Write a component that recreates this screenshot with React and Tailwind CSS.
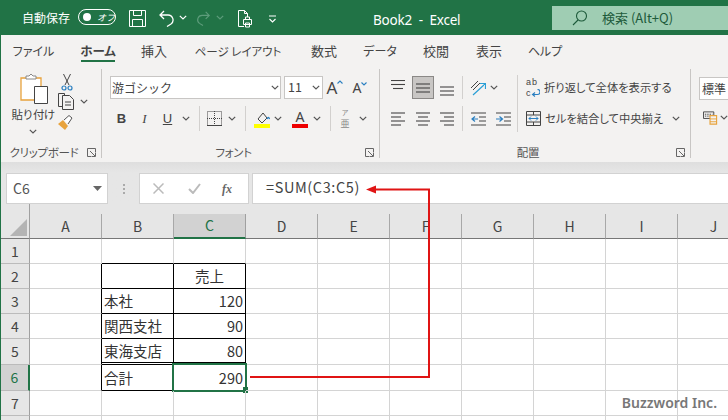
const ui = { fontFamily: '"Noto Sans CJK JP", sans-serif' };

const Chevron = ({ className = 'w-[8px]', color = '#555' }) => (
  <div className={`${className} flex justify-center shrink-0`}>
    <svg width="8" height="5" viewBox="0 0 8 5" fill="none" stroke={color} strokeWidth="1.2">
      <path d="M.8 .8 4 4 7.2 .8" />
    </svg>
  </div>
);

const Launcher = () => (
  <svg width="9" height="9" viewBox="0 0 9 9" fill="none" stroke="#666" strokeWidth="1">
    <path d="M8.5 4V.5H.5v8H4M3 3l5 5M8.5 4.500v4h-4" />
  </svg>
);

const Lines = ({ rows }) => (
  <svg width="16" height="16" viewBox="0 0 16 16" stroke="#444" strokeWidth="1.1" fill="none">
    {rows.map(([a, b, y]) => <path key={y} d={`M${a} ${y}H${b}`} />)}
  </svg>
);

const Cell = ({ className, children }) => (
  <div className={`${className} flex items-center justify-center shrink-0`}>{children}</div>
);

const Sep = ({ className }) => (
  <div className={`${className} flex justify-center shrink-0 h-full`}>
    <div className="w-px h-full bg-[#d2d0ce]" />
  </div>
);

const GroupLabel = ({ children }) => (
  <div className="h-[19px] -mb-[4px] flex items-center shrink-0">
    <div className="flex-1 text-center text-[11.5px] text-[#555] [font-feature-settings:'palt'] tracking-[-0.3px]">{children}</div>
    <div className="w-[14px] flex"><Launcher /></div>
  </div>
);

const tabs = [
  ['ファイル', 'w-[37px] ml-[14px] text-[12px]'],
  ['ホーム', 'w-[34px] ml-[29px] font-bold text-[12.5px]'],
  ['挿入', 'w-[26px] ml-[26px]'],
  ['ページ レイアウト', 'w-[86px] ml-[28px] text-[11.5px]'],
  ['数式', 'w-[26px] ml-[30px]'],
  ['データ', 'w-[32px] ml-[27px] text-[12px]'],
  ['校閲', 'w-[26px] ml-[27px]'],
  ['表示', 'w-[26px] ml-[27px]'],
  ['ヘルプ', 'w-[32px] ml-[27px] text-[12px]'],
];

const TitleBar = () => (
  <div className="h-[35px] bg-[#217346] flex items-start text-white shrink-0">
    <div className="ml-[21px] mt-[9px] text-[12px] leading-[17px] w-[50px] whitespace-nowrap">自動保存</div>
    <div className="ml-[6px] mt-[9px] w-[38px] h-[16px] border border-white rounded-full flex items-center pl-[4px]">
      <div className="w-[8px] h-[8px] rounded-full bg-white" />
      <div className="ml-[6px] text-[9px] leading-none italic">オフ</div>
    </div>
    <svg className="ml-[13px] mt-[10px]" width="17" height="17" viewBox="0 0 17 17" fill="none" stroke="#fff" strokeWidth="1">
      <path d="M.5.5h16v16H.5zM4.500.5v5h8v-5M3.500 16.500v-7h10v7" />
    </svg>
    <svg className="ml-[12px] mt-[10px]" width="18" height="17" viewBox="0 0 18 17" fill="none" stroke="#fff" strokeWidth="1.300">
      <path d="M6 1 2 5l4 4M2 5h8a5 5 0 0 1 3 9l-4 2.500" />
    </svg>
    <div className="mt-[15px] ml-[3px]"><Chevron color="#fff" /></div>
    <svg className="ml-[8px] mt-[10px]" width="16" height="17" viewBox="0 0 18 17" fill="none" stroke="#5d9c7b" strokeWidth="1.300">
      <path d="M12 1l4 4-4 4M16 5H8a5 5 0 0 0-3 9l4 2.500" />
    </svg>
    <div className="mt-[15px] ml-[5px]"><Chevron color="#5d9c7b" /></div>
    <svg className="ml-[13px] mt-[10px]" width="16" height="18" viewBox="0 0 16 18" fill="none" stroke="#fff" strokeWidth="1">
      <path d="M7 16.500H1.500V.5h6l3 3V7M7.500.5v3h3M6.500 9.500h8v5h-8zM8.500 9.500V7h4v2.500M8.500 13h4v4h-4z" />
    </svg>
    <svg className="ml-[15px] mt-[15px]" width="9" height="8" viewBox="0 0 9 8" fill="none" stroke="#fff" strokeWidth="1.100">
      <path d="M1 1h7M1.500 4 4.500 7l3-3" />
    </svg>
    <div className="ml-[96px] mt-[10px] text-[13.5px] leading-[20px] whitespace-pre w-[100px] tracking-[-0.2px]" style={{ fontFamily: '"Noto Sans", sans-serif' }}>
      Book2  -  Excel
    </div>
    <div className="ml-auto mt-[6px] w-[176px] h-[24px] bg-[#9fcdb3] flex items-center text-[#1d5a3a]">
      <svg className="ml-[20px]" width="16" height="16" viewBox="0 0 16 16" fill="none" stroke="#1d5a3a" strokeWidth="1.100">
        <circle cx="9.500" cy="6" r="5" /><path d="M6 10 1 15" />
      </svg>
      <div className="ml-[14px] text-[13px] whitespace-nowrap">検索 (Alt+Q)</div>
    </div>
  </div>
);

const TabBar = () => (
  <div className="h-[33px] bg-[#f3f2f1] flex shrink-0 text-[13px] text-[#444] [font-feature-settings:'palt']">
    {tabs.map(([label, cls]) => (
      <div key={label} className={`${cls} relative flex justify-center pt-[6px] leading-[20px] whitespace-nowrap shrink-0`}>
        {label}
        {label === 'ホーム' && <div className="absolute left-0 right-0 top-[25px] h-[2px] bg-[#217346]" />}
      </div>
    ))}
  </div>
);

const Clipboard = () => (
  <div className="w-[101px] shrink-0 flex flex-col border-r border-[#c8c6c4] mt-px mb-[4px]">
    <div className="flex-1 flex pt-[4px]">
      <div className="w-[57px] pl-[7px] flex flex-col items-center">
        <svg className="ml-[1px]" width="28" height="31" viewBox="0 0 28 31" fill="none">
          <path d="M1 5h20v22H1z" fill="#fff" stroke="#e8a33d" strokeWidth="1.300" />
          <path d="M6 6V3h3l2-2 2 2h3v3z" fill="#fff" stroke="#888" />
          <path d="M14.500 13.500h13v17h-13z" fill="#fff" stroke="#444" />
        </svg>
        <div className="text-[11.5px] leading-[14px] mt-[3px] tracking-[-0.8px] text-[#444] whitespace-nowrap">貼り付け</div>
        <div className="mt-[8px]"><Chevron /></div>
      </div>
      <div className="flex flex-col pt-[1px]">
        <svg className="ml-[3px]" width="12" height="17" viewBox="0 0 12 17" fill="none">
          <path d="M2.500 0 8 11M9.500 0 4 11" stroke="#444" />
          <circle cx="3" cy="14" r="2" stroke="#2a7fc1" strokeWidth="1.200" />
          <circle cx="9" cy="14" r="2" stroke="#2a7fc1" strokeWidth="1.200" />
        </svg>
        <div className="flex items-center mt-[2px]">
          <svg width="17" height="17" viewBox="0 0 17 17" fill="none" stroke="#444">
            <path d="M4.500 13.500H.5V.5h6v2" />
            <path d="M4.500 2.500h7l4 4v10h-11z" fill="#f3f2f1" />
            <path d="M7 9h6M7 12h6" />
          </svg>
          <Chevron className="w-[8px] ml-[5px]" />
        </div>
        <svg className="mt-[5px] ml-[-1px]" width="16" height="16" viewBox="0 0 16 16" fill="none">
          <path d="M1 9l5-4 5 6-3 4z" fill="#e8a33d" />
          <path d="M7 5l5-4.500 3 2.500-4 6" stroke="#555" fill="#fff" />
        </svg>
      </div>
    </div>
    <GroupLabel>クリップボード</GroupLabel>
  </div>
);

const SizeA = ({ size, d }) => (
  <span className="flex items-start">
    <span className={`${size} leading-none text-[#444]`} style={{ fontFamily: '"Noto Sans", sans-serif' }}>A</span>
    <svg className="mt-[1px]" width="6" height="4" viewBox="0 0 6 4" fill="none" stroke="#2a7fc1" strokeWidth="1.100"><path d={d} /></svg>
  </span>
);

const Font = () => (
  <div className="w-[278px] shrink-0 flex flex-col border-r border-[#c8c6c4] mt-px mb-[4px] pl-[8px]">
    <div className="flex-1 pt-[7px]">
      <div className="flex h-[23px]">
        <div className="w-[171px] shrink-0 h-full bg-white border border-[#c8c6c4] flex items-center justify-between pl-[1px] pr-[1px] text-[12px] text-[#444] whitespace-nowrap">
          游ゴシック<Chevron />
        </div>
        <div className="w-[39px] shrink-0 ml-[3px] h-full bg-white border border-[#c8c6c4] flex items-center justify-between pl-[3px] pr-[2px] text-[12.5px] text-[#444]">
          11<Chevron />
        </div>
        <Cell className="w-[24px] h-full"><SizeA size="text-[17px]" d="M.5 3.500 3 1l2.500 2.500" /></Cell>
        <Cell className="w-[24px] h-full ml-[1px]"><SizeA size="text-[14px]" d="M.5.5 3 3 5.500.5" /></Cell>
      </div>
      <div className="flex h-[25px] mt-[7px] items-center">
        <Cell className="w-[23px] text-[13px] font-bold text-[#444]"><span style={{ fontFamily: '"Liberation Sans", sans-serif' }}>B</span></Cell>
        <Cell className="w-[23px] text-[13px] italic text-[#444]"><span style={{ fontFamily: '"Liberation Serif", serif' }}>I</span></Cell>
        <Cell className="w-[23px] text-[13px] underline text-[#444]"><span style={{ fontFamily: '"Liberation Sans", sans-serif' }}>U</span></Cell>
        <Chevron className="w-[14px]" />
        <Sep className="w-[12px]" />
        <Cell className="w-[18px]">
          <svg width="15" height="15" viewBox="0 0 15 15" fill="none" stroke="#444" strokeDasharray="1 1">
            <path d="M.5.5h14v14H.5zM7.500 0v15M0 7.500h15" />
            <path d="M0 14.500h15" strokeDasharray="none" />
          </svg>
        </Cell>
        <Chevron className="w-[18px]" />
        <Sep className="w-[8px]" />
        <Cell className="w-[25px]">
          <svg width="16" height="18" viewBox="0 0 16 18" fill="none">
            <path d="M4 9l5-6 4 5-5 5z" stroke="#444" fill="#f3f2f1" />
            <path d="M13 9c1-2 2-2 2.500 0" stroke="#2a7fc1" strokeWidth="1.300" />
            <path d="M0 14h16v4H0z" fill="#ffff00" />
          </svg>
        </Cell>
        <Chevron />
        <Cell className="w-[26px] ml-[5px]">
          <div className="flex flex-col items-center">
            <span className="text-[14px] leading-[14px] text-[#444]" style={{ fontFamily: '"Noto Sans", sans-serif' }}>A</span>
            <div className="w-[16px] h-[4px] bg-[#ee0000]" />
          </div>
        </Cell>
        <Chevron />
        <Sep className="w-[18px]" />
        <Cell className="w-[12px]">
          <div className="flex flex-col items-center text-[#888]">
            <span className="text-[7px] leading-[10.200px]">ア</span>
            <span className="text-[9px] leading-[13.100px]">亜</span>
          </div>
        </Cell>
        <Chevron className="w-[8px] ml-[8px]" />
      </div>
    </div>
    <div className="-ml-[8px]"><GroupLabel>フォント</GroupLabel></div>
  </div>
);

const Align = () => (
  <div className="w-[311px] shrink-0 flex flex-col border-r border-[#c8c6c4] mt-px mb-[4px]">
    <div className="flex-1 flex pt-[7px]">
      <div className="w-[137px] pl-[7px] shrink-0">
        <div className="flex h-[23px] items-center">
          <Cell className="w-[22px] h-full"><Lines rows={[[1, 15, 0.5], [1, 15, 4.5], [3, 13, 8.5]]} /></Cell>
          <Cell className="w-[22px] h-full ml-[3px] bg-[#c8c6c4] border border-[#8a8886]"><Lines rows={[[1, 15, 4], [1, 15, 8], [1, 15, 12]]} /></Cell>
          <Cell className="w-[22px] h-full ml-[2px]"><Lines rows={[[1, 15, 7], [1, 15, 11], [1, 15, 15]]} /></Cell>
          <Sep className="w-[8px]" />
          <Cell className="w-[24px]">
            <svg width="16" height="16" viewBox="0 0 16 16" fill="none">
              <path d="M1 8 8 1M3 10l7-7" stroke="#444" />
              <path d="M3 15 15 4M10 3.500h5.500V9" stroke="#2a9fd6" strokeWidth="1.200" />
            </svg>
          </Cell>
          <Chevron />
        </div>
        <div className="flex h-[25px] mt-[7px] items-center">
          <Cell className="w-[22px]"><Lines rows={[[1, 15, 2], [1, 11, 6], [1, 15, 10], [1, 11, 14]]} /></Cell>
          <Cell className="w-[22px] ml-[3px]"><Lines rows={[[1, 15, 2], [3, 13, 6], [1, 15, 10], [3, 13, 14]]} /></Cell>
          <Cell className="w-[22px] ml-[2px]"><Lines rows={[[1, 15, 2], [5, 15, 6], [1, 15, 10], [5, 15, 14]]} /></Cell>
          <Sep className="w-[8px]" />
          <Cell className="w-[24px]">
            <svg width="15" height="14" viewBox="0 0 15 14" fill="none">
              <path d="M0 1h15M8 5h7M8 9h7M0 13h15" stroke="#444" />
              <path d="M7 7H1M4 4.500 1 7l3 2.500" stroke="#2a7fc1" strokeWidth="1.200" />
            </svg>
          </Cell>
          <Cell className="w-[24px] ml-[1px]">
            <svg width="15" height="14" viewBox="0 0 15 14" fill="none">
              <path d="M0 1h15M8 5h7M8 9h7M0 13h15" stroke="#444" />
              <path d="M0 7h6M3.500 4.500 6.500 7l-3 2.500" stroke="#2a7fc1" strokeWidth="1.200" />
            </svg>
          </Cell>
        </div>
      </div>
      <div className="w-px h-[57px] -mt-px bg-[#d2d0ce] shrink-0" />
      <div className="pl-[8px] text-[11.3px] text-[#444] [font-feature-settings:'palt'] whitespace-nowrap">
        <div className="flex h-[23px] items-center">
          <div className="w-[18px] text-[9px] text-[#444]" style={{ fontFamily: '"Liberation Sans", sans-serif' }}>
            <div className="tracking-[1px] leading-[10.400px]">ab</div>
            <div className="flex items-center leading-[10.400px]">c
              <svg width="9" height="8" viewBox="0 0 9 8" fill="none" stroke="#2a7fc1" strokeWidth="1.100"><path d="M4 7.500 1.500 5.500 4 3.500M1.500 5.500h5a1.500 1.500 0 0 0 0-5" /></svg>
            </div>
          </div>
          <span>折り返して全体を表示する</span>
        </div>
        <div className="flex h-[25px] mt-[7px] items-center">
          <svg className="shrink-0" width="15" height="15" viewBox="0 0 15 15" fill="none">
            <path d="M.5.5h14v14H.5zM0 4h15M0 11h15M7.500 11v4M7.500 0v4" stroke="#444" />
            <path d="M3 7.500h9M5 5.500l-2 2 2 2M10 5.500l2 2-2 2" stroke="#2a7fc1" />
          </svg>
          <span className="ml-[4px]">セルを結合して中央揃え</span>
          <Chevron className="w-[8px] ml-[9px]" />
        </div>
      </div>
    </div>
    <GroupLabel>配置</GroupLabel>
  </div>
);

const NumberGroup = () => (
  <div className="flex-1 pl-[8px] pt-[9px] overflow-hidden">
    <div className="w-[60px] h-[23px] bg-white border border-[#c8c6c4] flex items-center pl-[2px] text-[12px] text-[#444]">標準</div>
    <div className="flex items-center mt-[9px] ml-[4px]">
      <svg width="16" height="17" viewBox="0 0 16 17" fill="none">
        <path d="M.5 2.500h11v7H.5z" stroke="#444" />
        <path d="M2 5h8M2 7h8" stroke="#444" strokeDasharray="1.500 1" />
        <path d="M7.500 6.500h7v9h-7z" fill="#f3f2f1" stroke="#e8a33d" strokeWidth="1.200" />
        <path d="M7.500 10h7M7.500 13h7" stroke="#e8a33d" />
      </svg>
      <Chevron className="w-[8px] ml-[2px]" />
    </div>
  </div>
);

const FormulaBar = () => (
  <div className="h-[42px] shrink-0 bg-gradient-to-b from-[#dedede] to-[#e6e6e6] to-[25%] flex items-end">
    <div className="w-[102px] h-[31px] ml-[5px] bg-white border border-[#d2d2d2] flex items-center justify-between pl-[6px] pr-[5px] text-[14px] text-[#555]">
      C6
      <svg width="9" height="5" viewBox="0 0 9 5"><path d="M0 0h9L4.500 5z" fill="#666" /></svg>
    </div>
    <div className="w-[31px] h-[31px] flex flex-col items-center justify-center gap-[2px]">
      <div className="w-[2px] h-[2px] bg-[#aaa]" /><div className="w-[2px] h-[2px] bg-[#aaa]" /><div className="w-[2px] h-[2px] bg-[#aaa]" />
    </div>
    <div className="w-[110px] h-[31px] bg-white border border-[#d2d2d2] flex items-center">
      <svg className="ml-[13px]" width="11" height="11" viewBox="0 0 11 11" stroke="#bbb" strokeWidth="1.500"><path d="M.5.5l10 10M10.500.5l-10 10" /></svg>
      <svg className="ml-[24px]" width="13" height="11" viewBox="0 0 13 11" fill="none" stroke="#bbb" strokeWidth="2"><path d="M1 6l4 4 7-9" /></svg>
      <span className="ml-[21px] text-[12px] italic font-bold text-[#666]" style={{ fontFamily: '"Liberation Serif", serif' }}>fx</span>
    </div>
    <div className="flex-1 ml-[3px] h-[31px] bg-white border-y border-l border-[#d2d2d2] flex items-center pl-[13px] pb-[3px] text-[14.5px] tracking-[0.6px] text-[#444]">
      =SUM(C3:C5)
    </div>
  </div>
);

const cols = ['A', 'B', 'C', 'D', 'E', 'F', 'G', 'H', 'I', 'J'];
const rowH = ['h-[25px]', 'h-[25px]', 'h-[25px]', 'h-[25px]', 'h-[26px]', 'h-[26px]', 'h-[25px]', 'h-[25px]'];

const values = {
  C2: ['売上', 'justify-center'],
  B3: ['本社', 'justify-start'],
  C3: ['120', 'justify-end'],
  B4: ['関西支社', 'justify-start'],
  C4: ['90', 'justify-end'],
  B5: ['東海支店', 'justify-start'],
  C5: ['80', 'justify-end'],
  B6: ['合計', 'justify-start'],
  C6: ['290', 'justify-end'],
};

// black borders of the small table, the cells draw their right and bottom edge
const cellBorder = (c, r) => {
  const inCol = c === 'B' || c === 'C';
  const right = (c === 'A' || inCol) && r >= 2 && r <= 6 ? 'border-r-black' : 'border-r-[#d4d4d4]';
  let bottom = 'border-b border-b-[#d4d4d4]';
  if (inCol && r === 5) bottom = 'border-b-[3px] border-b-black border-double';
  else if (inCol && r >= 1 && r <= 6) bottom = 'border-b border-b-black';
  return `${right} ${bottom}`;
};

const Sheet = () => (
  <div className="flex-1 bg-white">
    <div className="flex h-[35px] bg-[#e6e6e6]">
      <div className="w-[29px] shrink-0 border-r border-b border-r-[#a0a0a0] border-b-[#777] relative">
        <svg className="absolute left-[9px] bottom-[2px]" width="17" height="17" viewBox="0 0 17 17"><path d="M17 0v17H0z" fill="#b4b4b4" /></svg>
      </div>
      {cols.map((c) => (
        <div key={c} className="w-[72px] shrink-0 flex flex-col">
          <div className="h-[10px]" />
          <div className={c === 'C'
            ? 'flex-1 bg-[#d2d2d2] border-b-2 border-b-[#217346] border-r border-r-[#a0a0a0] flex items-center justify-center text-[14px] text-[#217346]'
            : 'flex-1 border-b border-b-[#777] border-r border-r-[#a8a8a8] flex items-center justify-center text-[14px] text-[#444]'}>
            {c}
          </div>
        </div>
      ))}
    </div>
    {rowH.map((h, i) => {
      const r = i + 1;
      return (
        <div key={r} className={`flex ${h}`}>
          <div className={r === 6
            ? 'w-[29px] shrink-0 bg-[#d2d2d2] border-r-2 border-r-[#217346] border-b border-b-[#bbb] flex items-center justify-center text-[14px] text-[#217346]'
            : 'w-[29px] shrink-0 bg-[#e6e6e6] border-r border-r-[#a0a0a0] border-b border-b-[#bbb] flex items-center justify-center text-[14px] text-[#444]'}>
            {r < 8 ? r : ''}
          </div>
          {cols.map((c) => {
            const v = values[c + r];
            const selected = c === 'C' && r === 6;
            return (
              <div key={c} className={`w-[72px] shrink-0 border-r ${cellBorder(c, r)} relative flex items-center px-[2px] text-[14.500px] text-[#333] ${v ? v[1] : ''}`}>
                {v && v[0]}
                {selected && (
                  <div className="absolute -left-[2px] -top-[2px] -right-[2px] -bottom-[2px] border-2 border-[#217346]">
                    <div className="absolute -right-[3px] -bottom-[3px] w-[5px] h-[6px] bg-[#217346]" />
                  </div>
                )}
              </div>
            );
          })}
        </div>
      );
    })}
  </div>
);

export default function App() {
  return (
    <div className="relative w-[728px] h-[420px] overflow-hidden flex flex-col border-l border-[#217346] bg-white" style={ui}>
      <TitleBar />
      <TabBar />
      <div className="h-[94px] shrink-0 bg-[#f3f2f1] flex">
        <Clipboard />
        <Font />
        <Align />
        <NumberGroup />
      </div>
      <FormulaBar />
      <Sheet />

      {/* red callout arrows drawn over the sheet */}
      <svg className="absolute left-[-1px] top-0 pointer-events-none" width="728" height="420" viewBox="0 0 728 420" fill="none">
        <path d="M250 377H429V189.500H374" stroke="#e01414" strokeWidth="2" />
        <path d="M366 189.500 376 185.500V193.500Z" fill="#e01414" />
      </svg>
      <div className="absolute right-[11px] bottom-[8px] text-[14px] leading-[18px] font-semibold text-[#777]" style={{ fontFamily: '"Noto Sans", sans-serif' }}>
        Buzzword Inc.
      </div>
    </div>
  );
}
